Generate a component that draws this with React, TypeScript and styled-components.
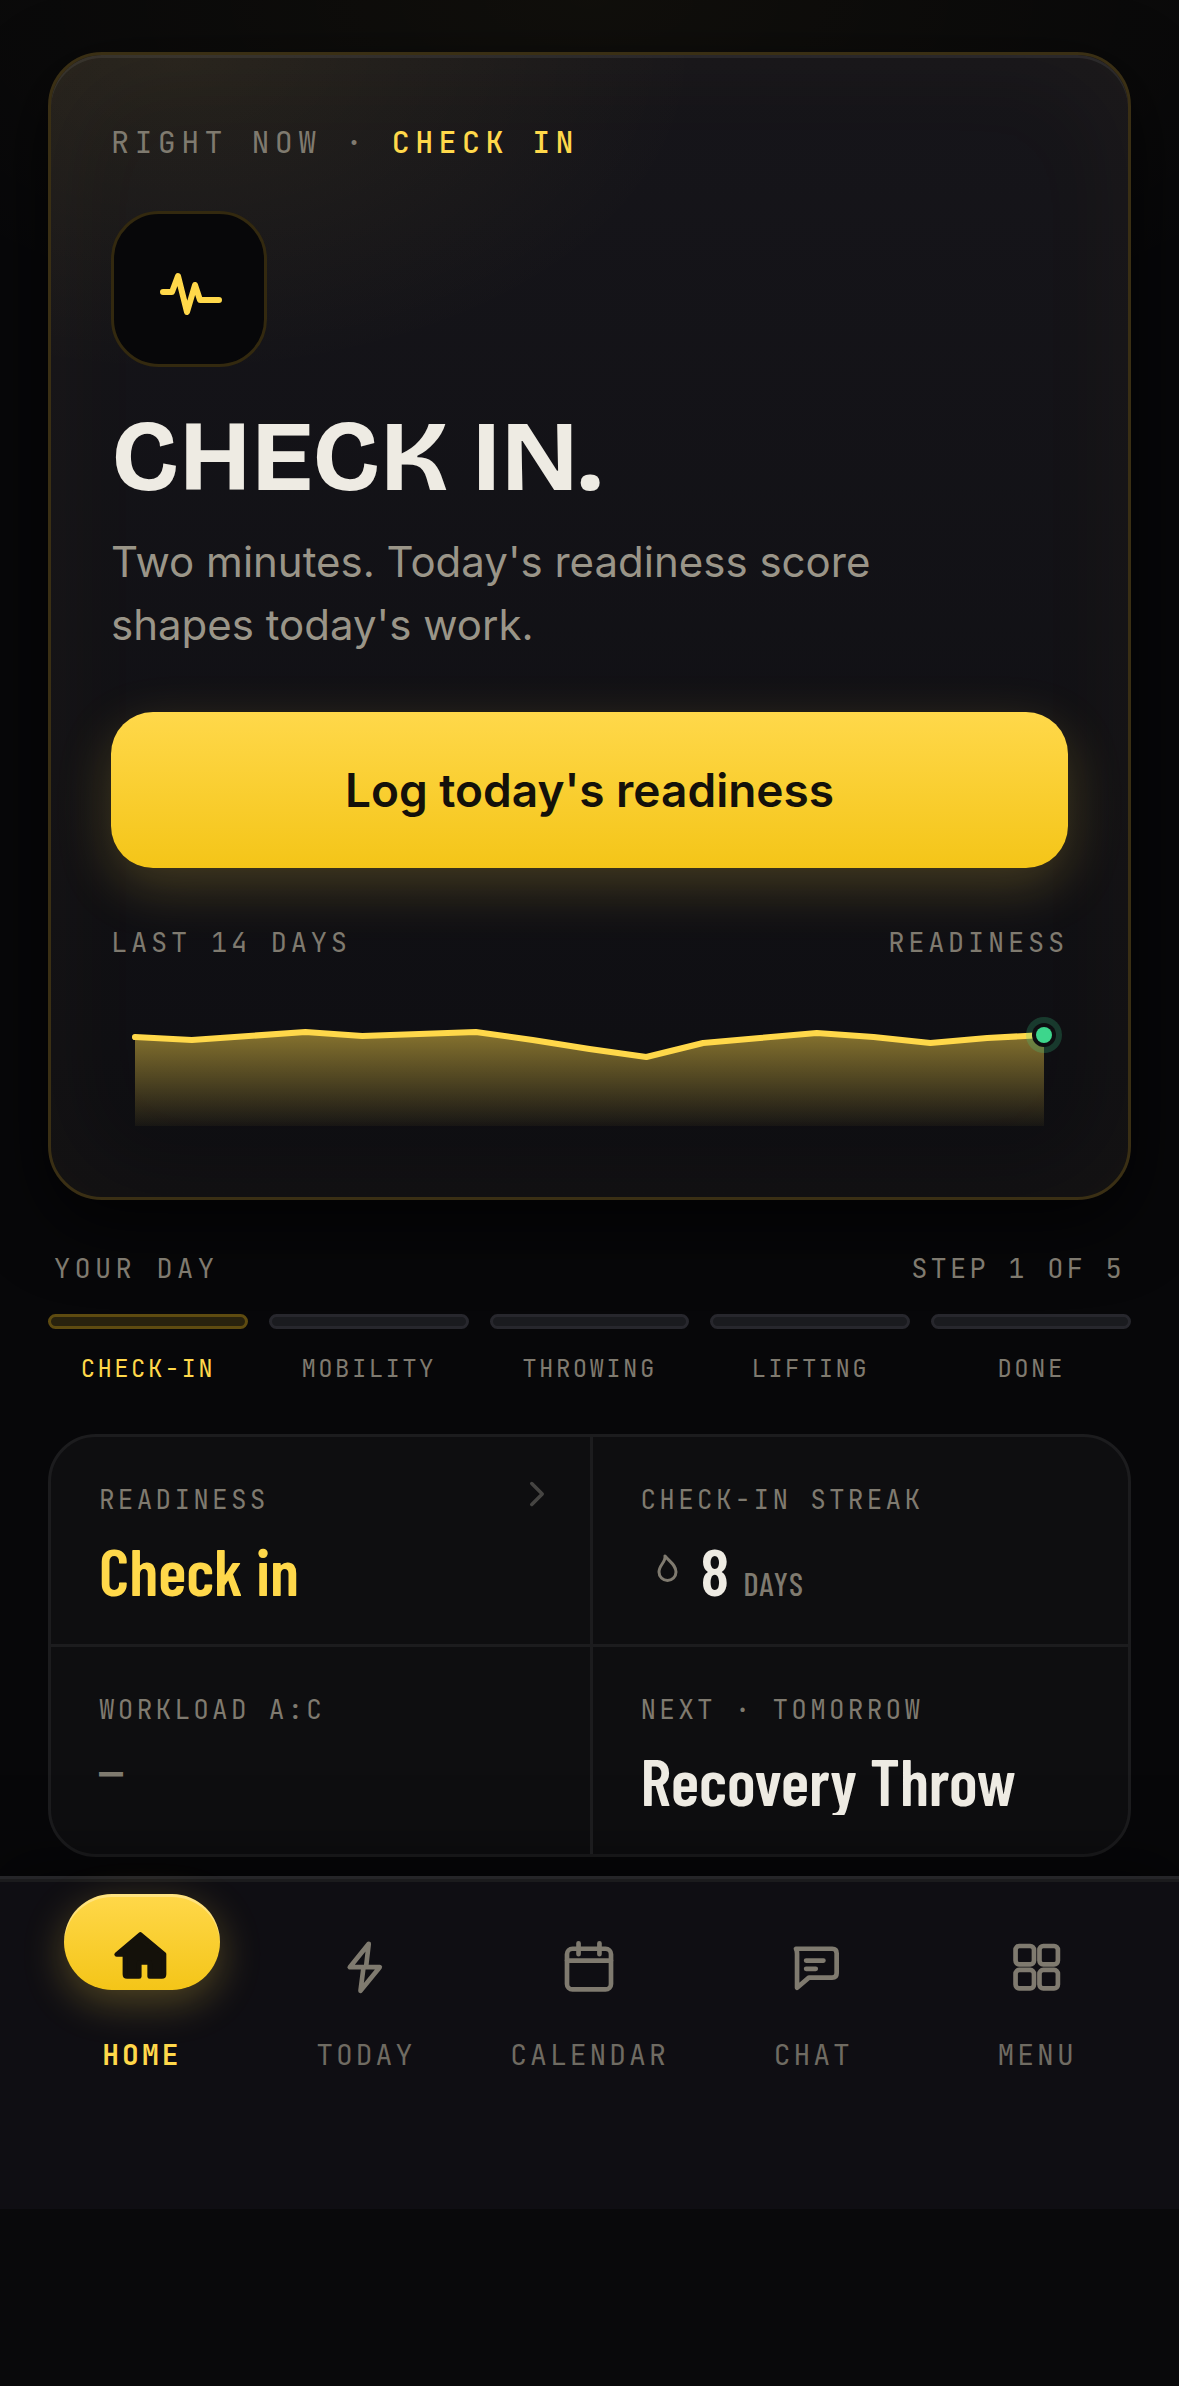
import React from "react";
import styled, { createGlobalStyle, css } from "styled-components";

const color = {
  ink: "#eeebe3",
  muted: "#9a9588",
  dim: "#7f7a6f",
  gold: "#ffd84a",
  goldDeep: "#f4c518",
  green: "#3dd68c",
  line: "#1c1c1e",
};

const display = `"Bricolage Grotesque", Archivo, Inter, sans-serif`;
const sans = `Inter, "Liberation Sans", sans-serif`;
const mono = `"JetBrains Mono", "DejaVu Sans Mono", "Liberation Mono", monospace`;
const condensed = `"Barlow Condensed", "Roboto Condensed", "Liberation Sans Narrow", Roboto, sans-serif`;

const GlobalStyle = createGlobalStyle`
  *, *::before, *::after { box-sizing: border-box; }
  html { background: #09090b; }
  body { margin: 0; color: ${color.ink}; font-family: ${sans}; }
  h1, p, dl, dd, dt, ol { margin: 0; padding: 0; }
`;

const Screen = styled.div`
  display: flex;
  flex-direction: column;
`;

const Content = styled.main`
  display: flex;
  flex-direction: column;
  padding: 52px 48px 19px;
  background:
    radial-gradient(ellipse 70% 20% at 50% 0%, rgba(255, 216, 74, 0.04), transparent),
    #070709;
`;

const monoText = css<{ $size: number; $track: number; $leading: number }>`
  font-family: ${mono};
  font-size: ${(p) => p.$size}px;
  line-height: ${(p) => p.$leading}px;
  letter-spacing: ${(p) => p.$track}em;
  text-transform: uppercase;
  white-space: nowrap;
`;

const Label = styled.span<{ $size: number; $track: number; $leading: number }>`
  ${monoText}
  color: ${color.dim};
`;

const Hero = styled.section`
  display: flex;
  flex-direction: column;
  padding: 60px;
  border: 3px solid #3a2f14;
  border-radius: 54px;
  background:
    radial-gradient(ellipse 520px 320px at 12% 0%, rgba(255, 216, 74, 0.07), transparent),
    linear-gradient(180deg, #16151a 0%, #0e0e12 100%);
  box-shadow:
    inset 0 3px 0 rgba(255, 255, 255, 0.07),
    inset 0 0 120px rgba(255, 216, 74, 0.04),
    0 24px 72px rgba(0, 0, 0, 0.7);
`;

const Kicker = styled.p`
  font-family: ${mono};
  font-size: 30px;
  line-height: 54px;
  letter-spacing: 0.18em;
  text-transform: uppercase;
  color: ${color.dim};

  strong {
    font-weight: 500;
    color: ${color.gold};
  }
`;

const Badge = styled.div`
  display: grid;
  place-items: center;
  width: 156px;
  height: 156px;
  margin-top: 42px;
  border: 3px solid #33290f;
  border-radius: 48px;
  background: #070709;
`;

const Title = styled.h1`
  margin-top: 42px;
  font-family: ${display};
  font-size: 100px;
  line-height: 97px;
  font-weight: 700;
`;

const Lead = styled.p`
  max-width: 840px;
  margin-top: 24px;
  font-size: 42px;
  line-height: 63px;
  color: ${color.muted};
`;

const PrimaryButton = styled.button`
  height: 156px;
  margin-top: 56px;
  border: 0;
  border-radius: 42px;
  background: linear-gradient(180deg, ${color.gold}, ${color.goldDeep});
  box-shadow: 0 18px 54px rgba(255, 216, 74, 0.22);
  font-family: ${sans};
  font-size: 46px;
  font-weight: 600;
  color: #14110a;
  cursor: pointer;
`;

const SplitRow = styled.div<{ $top: number; $inset?: number }>`
  display: flex;
  justify-content: space-between;
  margin-top: ${(p) => p.$top}px;
  padding: 0 ${(p) => p.$inset ?? 0}px;
`;

const ChartSvg = styled.svg`
  display: block;
  width: 100%;
  height: auto;
  margin-top: 43px;
`;

const Steps = styled.ol`
  display: grid;
  grid-template-columns: repeat(5, 1fr);
  gap: 21px;
  margin-top: 26px;
  list-style: none;
`;

const Step = styled.li<{ $active: boolean }>`
  ${monoText}
  display: flex;
  flex-direction: column;
  gap: 22px;
  text-align: center;
  color: ${(p) => (p.$active ? color.gold : color.dim)};

  &::before {
    content: "";
    height: 15px;
    border: 3px solid ${(p) => (p.$active ? "#5e4b10" : "#27272d")};
    border-radius: 8px;
    background: ${(p) => (p.$active ? "#28220e" : "#1a1b1f")};
  }
`;

const Stats = styled.dl`
  display: grid;
  grid-template-columns: 1fr 1fr;
  margin-top: 47px;
  overflow: hidden;
  border: 3px solid ${color.line};
  border-radius: 48px;
  background: #0e0e10;
`;

const Stat = styled.div`
  position: relative;
  padding: 42px 48px 39px;

  &:nth-child(even) {
    border-left: 3px solid ${color.line};
  }
  &:nth-child(n + 3) {
    border-top: 3px solid ${color.line};
  }
`;

const StatLabel = styled.dt`
  font-family: ${mono};
  font-size: 26px;
  line-height: 42px;
  letter-spacing: 0.125em;
  text-transform: uppercase;
  white-space: nowrap;
  color: ${color.dim};
`;

const StatValue = styled.dd<{ $tone?: string; $clip?: boolean }>`
  display: flex;
  align-items: baseline;
  height: 70px;
  margin-top: 14px;
  overflow: ${(p) => (p.$clip ? "hidden" : "visible")};
  font-family: ${condensed};
  font-size: 66px;
  line-height: 70px;
  font-weight: 600;
  white-space: nowrap;
  color: ${(p) => p.$tone ?? color.ink};
`;

const Empty = styled.span`
  font-family: ${sans};
  font-size: 48px;
  line-height: 54px;
  font-weight: 500;
  align-self: flex-start;
`;

const Unit = styled.span`
  margin-left: 14px;
  font-size: 33px;
  font-weight: 500;
  letter-spacing: 0.04em;
  color: ${color.dim};
`;

const DropIcon = styled.svg`
  align-self: flex-start;
  width: 42px;
  height: 42px;
  margin: 12px 12px 0 6px;
`;

const Chevron = styled.svg`
  position: absolute;
  top: 36px;
  right: 32px;
  width: 42px;
  height: 42px;
`;

const TabBar = styled.nav`
  display: grid;
  grid-template-columns: repeat(5, 1fr);
  padding: 41px 30px 134px;
  border-top: 3px solid #252528;
  background: #0f0e13;
  box-shadow:
    inset 0 3px 0 #1b1b1d,
    0 -12px 60px rgba(0, 0, 0, 0.5);
`;

const Tab = styled.a<{ $active: boolean }>`
  display: flex;
  flex-direction: column;
  align-items: center;
  gap: 19px;
  font-family: ${mono};
  font-size: 28px;
  line-height: 40px;
  letter-spacing: 3px;
  text-transform: uppercase;
  text-decoration: none;
  font-weight: ${(p) => (p.$active ? 600 : 400)};
  color: ${(p) => (p.$active ? color.gold : "#6f6b62")};
`;

const TabIcon = styled.span<{ $active: boolean }>`
  display: flex;
  align-items: center;
  justify-content: center;
  width: 156px;
  height: 96px;
  color: ${color.dim};

  svg {
    width: 66px;
    height: 66px;
  }

  ${(p) =>
    p.$active &&
    css`
      align-items: flex-end;
      margin: -26px 0 26px;
      border-radius: 48px;
      background: linear-gradient(180deg, ${color.gold}, ${color.goldDeep});
      box-shadow:
        inset 0 3px 0 rgba(255, 255, 255, 0.3),
        0 12px 42px rgba(255, 216, 74, 0.28);
      color: #14110a;
    `}
`;

const strokeProps = {
  fill: "none",
  stroke: "currentColor",
  strokeWidth: 1.7,
  strokeLinecap: "round" as const,
  strokeLinejoin: "round" as const,
};

const icons = {
  home: (
    <svg viewBox="0 0 24 24" {...strokeProps} fill="currentColor" aria-hidden="true">
      <path d="M11.4 3.8 2.8 11.1H5.8V18.3Q5.8 19.1 6.6 19.1H11V14H14.8V19.1H19.2Q20 19.1 20 18.3V11Z" />
    </svg>
  ),
  today: (
    <svg viewBox="0 0 24 24" {...strokeProps} aria-hidden="true">
      <path d="M13 3.2 6.1 11.7H11.1L10 20.3 17 11.7H12Z" />
    </svg>
  ),
  calendar: (
    <svg viewBox="0 0 24 24" {...strokeProps} aria-hidden="true">
      <rect x="4" y="5" width="16" height="14.8" rx="2" />
      <path d="M4 9.3H20M8.2 3V7M15.8 3V7" />
    </svg>
  ),
  chat: (
    <svg viewBox="0 0 24 24" {...strokeProps} aria-hidden="true">
      <path d="M5.8 5H19Q20.6 5 20.6 6.6V13.9Q20.6 15.5 19 15.5H10.5L6.2 19.2V6.8Q6.2 5.8 5.8 5ZM9.5 9.3H15.8M9.5 12.3H13" />
    </svg>
  ),
  menu: (
    <svg viewBox="0 0 24 24" {...strokeProps} aria-hidden="true">
      <rect x="4.2" y="4" width="6.7" height="6.7" rx="1.4" />
      <rect x="12.9" y="4" width="6.7" height="6.7" rx="1.4" />
      <rect x="4.2" y="12.7" width="6.7" height="6.7" rx="1.4" />
      <rect x="12.9" y="12.7" width="6.7" height="6.7" rx="1.4" />
    </svg>
  ),
};

const tabs: { name: string; icon: keyof typeof icons }[] = [
  { name: "Home", icon: "home" },
  { name: "Today", icon: "today" },
  { name: "Calendar", icon: "calendar" },
  { name: "Chat", icon: "chat" },
  { name: "Menu", icon: "menu" },
];

const steps = ["Check-in", "Mobility", "Throwing", "Lifting", "Done"];

const readings = [32, 35, 31, 27, 31, 29, 27, 35, 44, 52, 38, 33, 28, 32, 38, 33, 30];
const chart = { width: 957, height: 132, side: 24, base: 121 };

function ReadinessChart() {
  const span = chart.width - chart.side * 2;
  const points = readings.map((y, i) => [
    chart.side + (span * i) / (readings.length - 1),
    y,
  ]);
  const line = points.map(([x, y]) => `${x},${y}`).join(" ");
  const [endX, endY] = points[points.length - 1];
  const area = `${chart.side},${chart.base} ${line} ${endX},${chart.base}`;
  return (
    <ChartSvg
      viewBox={`0 0 ${chart.width} ${chart.height}`}
      role="img"
      aria-label="Readiness over the last 14 days"
    >
      <defs>
        <linearGradient id="area" x1="0" y1="0" x2="0" y2="1">
          <stop offset="0" stopColor={color.gold} stopOpacity="0.5" />
          <stop offset="1" stopColor={color.gold} stopOpacity="0.04" />
        </linearGradient>
      </defs>
      <polygon points={area} fill="url(#area)" />
      <polyline
        points={line}
        fill="none"
        stroke={color.gold}
        strokeWidth="6"
        strokeLinecap="round"
        strokeLinejoin="round"
      />
      <circle cx={endX} cy={endY} r="18" fill={color.green} fillOpacity="0.22" />
      <circle cx={endX} cy={endY} r="12" fill="#0e0e11" />
      <circle cx={endX} cy={endY} r="8" fill={color.green} />
    </ChartSvg>
  );
}

export default function App() {
  return (
    <>
      <GlobalStyle />
      <Screen>
        <Content>
          <Hero>
            <Kicker>
              Right now · <strong>Check in</strong>
            </Kicker>
            <Badge>
              <svg
                width="66"
                height="66"
                viewBox="0 0 66 66"
                fill="none"
                stroke={color.gold}
                strokeWidth="6"
                strokeLinecap="round"
                strokeLinejoin="round"
                aria-hidden="true"
              >
                <path d="M7 36H16L22 20 31 56 39 29 44 44H63" />
              </svg>
            </Badge>
            <Title>CHECK IN.</Title>
            <Lead>Two minutes. Today's readiness score shapes today's work.</Lead>
            <PrimaryButton type="button">Log today's readiness</PrimaryButton>
            <SplitRow $top={54}>
              <Label $size={27} $track={0.14} $leading={40}>
                Last 14 days
              </Label>
              <Label $size={27} $track={0.14} $leading={40}>
                Readiness
              </Label>
            </SplitRow>
            <ReadinessChart />
          </Hero>

          <SplitRow $top={48} $inset={6}>
            <Label $size={27} $track={0.16} $leading={40}>
              Your day
            </Label>
            <Label $size={27} $track={0.12} $leading={40}>
              Step 1 of 5
            </Label>
          </SplitRow>
          <Steps>
            {steps.map((name, i) => (
              <Step key={name} $active={i === 0} $size={24} $track={0.1} $leading={36}>
                {name}
              </Step>
            ))}
          </Steps>

          <Stats>
            <Stat>
              <StatLabel>Readiness</StatLabel>
              <StatValue $tone={color.gold}>Check in</StatValue>
              <Chevron
                viewBox="0 0 24 24"
                fill="none"
                stroke="#454442"
                strokeWidth="2"
                strokeLinecap="round"
                strokeLinejoin="round"
                aria-hidden="true"
              >
                <path d="M9 6 15 12 9 18" />
              </Chevron>
            </Stat>
            <Stat>
              <StatLabel>Check-in streak</StatLabel>
              <StatValue>
                <DropIcon
                  viewBox="0 0 42 42"
                  fill="none"
                  stroke={color.dim}
                  strokeWidth="3"
                  strokeLinejoin="round"
                  strokeLinecap="round"
                  aria-hidden="true"
                >
                  <path d="M18 9C19 15 12 18 12 25A8 8 0 0 0 29 25C29 18 23 15 18 9Z" />
                </DropIcon>
                8<Unit>DAYS</Unit>
              </StatValue>
            </Stat>
            <Stat>
              <StatLabel>Workload A:C</StatLabel>
              <StatValue $tone={color.dim}>
                <Empty>–</Empty>
              </StatValue>
            </Stat>
            <Stat>
              <StatLabel>Next · Tomorrow</StatLabel>
              <StatValue $clip>Recovery Throw</StatValue>
            </Stat>
          </Stats>
        </Content>

        <TabBar aria-label="Main">
          {tabs.map(({ name, icon }, i) => (
            <Tab
              key={name}
              href={`#${icon}`}
              $active={i === 0}
              aria-current={i === 0 ? "page" : undefined}
            >
              <TabIcon $active={i === 0}>{icons[icon]}</TabIcon>
              {name}
            </Tab>
          ))}
        </TabBar>
      </Screen>
    </>
  );
}
